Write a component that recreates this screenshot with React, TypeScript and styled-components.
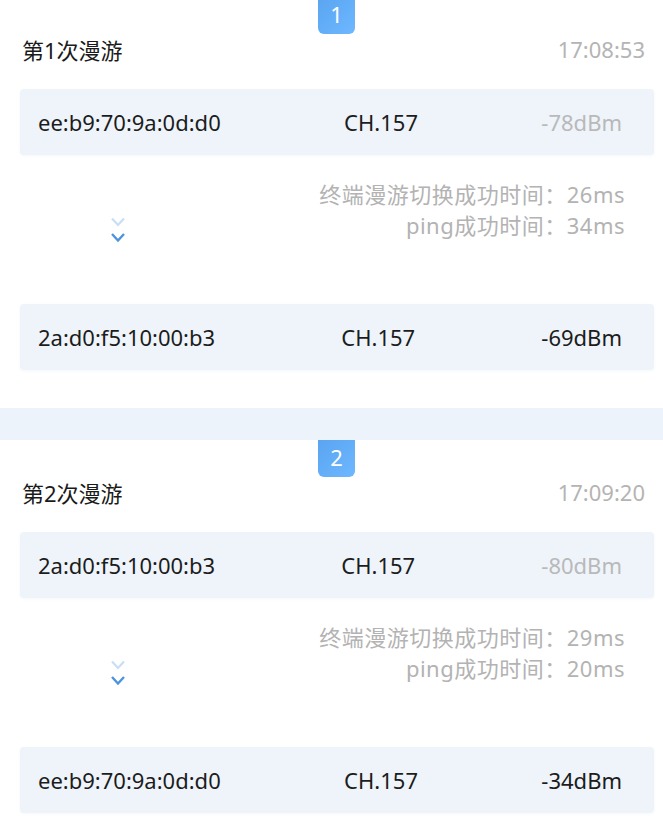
import React from 'react'
import styled, { createGlobalStyle } from 'styled-components'

const GlobalStyle = createGlobalStyle`
  html, body {
    margin: 0;
    padding: 0;
    background: #edf3fa;
  }
  body {
    font-family: "Noto Sans", "Noto Sans CJK SC", sans-serif;
  }
`

type Ap = { mac: string; ch: string; dbm: string; muted?: boolean }

type Roam = {
  no: number
  time: string
  from: Ap
  to: Ap
  switchMs: number
  pingMs: number
}

const roams: Roam[] = [
  {
    no: 1,
    time: '17:08:53',
    from: { mac: 'ee:b9:70:9a:0d:d0', ch: 'CH.157', dbm: '-78dBm', muted: true },
    to: { mac: '2a:d0:f5:10:00:b3', ch: 'CH.157', dbm: '-69dBm' },
    switchMs: 26,
    pingMs: 34,
  },
  {
    no: 2,
    time: '17:09:20',
    from: { mac: '2a:d0:f5:10:00:b3', ch: 'CH.157', dbm: '-80dBm', muted: true },
    to: { mac: 'ee:b9:70:9a:0d:d0', ch: 'CH.157', dbm: '-34dBm' },
    switchMs: 29,
    pingMs: 20,
  },
]

export default function App() {
  return (
    <>
      <GlobalStyle />
      <List>
        {roams.map((r) => (
          <Card key={r.no}>
            <Badge>{r.no}</Badge>
            <Header>
              <Title>第{r.no}次漫游</Title>
              <Time>{r.time}</Time>
            </Header>
            <ApRow ap={r.from} />
            <Transition>
              <Chevrons />
              <Info>
                <div>终端漫游切换成功时间：{r.switchMs}ms</div>
                <div>ping成功时间：{r.pingMs}ms</div>
              </Info>
            </Transition>
            <ApRow ap={r.to} />
          </Card>
        ))}
      </List>
    </>
  )
}

function ApRow({ ap }: { ap: Ap }) {
  return (
    <Row>
      <Cell>{ap.mac}</Cell>
      <Cell>{ap.ch}</Cell>
      <Cell $muted={ap.muted}>{ap.dbm}</Cell>
    </Row>
  )
}

function Chevrons() {
  return (
    <ChevronIcon width="16" height="30" viewBox="0 0 16 30" fill="none" strokeLinejoin="miter">
      <polyline points="2,3.5 8,10 14,3.5" stroke="#c8def5" strokeWidth="2.2" />
      <polyline points="2,19 8,25.5 14,19" stroke="#4d93dc" strokeWidth="2.4" />
    </ChevronIcon>
  )
}

const List = styled.div`
  display: flex;
  flex-direction: column;
  gap: 32px;
  margin-top: -3px;
`

const Card = styled.section`
  display: flex;
  flex-direction: column;
  background: #ffffff;
  padding-bottom: 38px;
`

const Badge = styled.div`
  align-self: center;
  margin-left: 10px;
  width: 37px;
  height: 37px;
  box-sizing: border-box;
  padding-bottom: 3px;
  display: flex;
  align-items: center;
  justify-content: center;
  border-radius: 0 0 6px 6px;
  background: linear-gradient(135deg, #5aa4f1 0%, #6db8ff 100%);
  color: #ffffff;
  font-size: 22px;
`

const Header = styled.div`
  display: flex;
  justify-content: space-between;
  align-items: center;
  height: 30px;
  padding: 0 18px 0 22px;
  font-size: 22px;
`

const Title = styled.span`
  color: #1a1a1a;
`

const Time = styled.span`
  color: #b4b4b4;
`

const Row = styled.div`
  display: flex;
  justify-content: space-between;
  align-items: center;
  height: 66px;
  margin: 25px 9px 0 20px;
  padding: 0 32px 0 18px;
  border-radius: 4px;
  background: #eef4fa;
  box-shadow: 0 1px 3px rgba(120, 150, 190, 0.08);
  font-size: 22px;
`

const Cell = styled.span<{ $muted?: boolean }>`
  color: ${(p) => (p.$muted ? '#b9b9b9' : '#1c1c1c')};
`

const Transition = styled.div`
  display: flex;
  justify-content: space-between;
  align-items: flex-start;
  height: 149px;
  box-sizing: border-box;
  padding: 24px 38px 0 110px;

  & + ${Row} {
    margin-top: 0;
  }
`

const ChevronIcon = styled.svg`
  margin-top: 36px;
  flex-shrink: 0;
`

const Info = styled.div`
  text-align: right;
  line-height: 31px;
  font-size: 22px;
  letter-spacing: 0.5px;
  color: #b3b3b3;
`
